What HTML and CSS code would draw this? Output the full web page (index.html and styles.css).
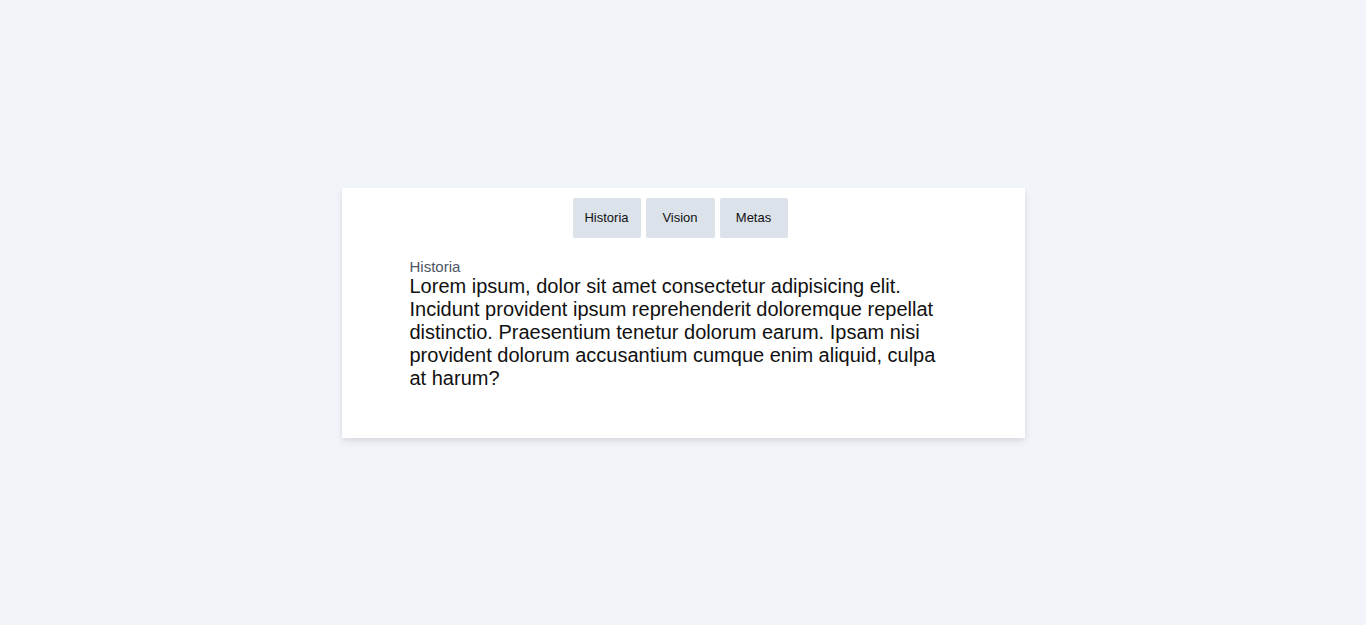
FILE: index.html
```html
<!DOCTYPE html>
<html lang="es">
<head>
<meta charset="utf-8">
<title>Tabs</title>
<link rel="stylesheet" href="styles.css">
</head>
<body>
<main class="page">
  <section class="card">
    <nav class="tabs">
      <button class="tab">Historia</button>
      <button class="tab">Vision</button>
      <button class="tab">Metas</button>
    </nav>
    <article class="content">
      <h2 class="label">Historia</h2>
      <p class="text">Lorem ipsum, dolor sit amet consectetur adipisicing elit. Incidunt provident ipsum reprehenderit doloremque repellat distinctio. Praesentium tenetur dolorum earum. Ipsam nisi provident dolorum accusantium cumque enim aliquid, culpa at harum?</p>
    </article>
  </section>
</main>
</body>
</html>
```
FILE: styles.css
```css
html, body {
  margin: 0;
  padding: 0;
}
body {
  background: #f1f5f9;
  font-family: "Liberation Sans", Arial, sans-serif;
}
.page {
  min-height: 625px;
  display: flex;
  align-items: center;
  justify-content: center;
}
.card {
  width: 683px;
  height: 250px;
  box-sizing: border-box;
  background: #fff;
  box-shadow: 0 4px 8px rgba(0, 0, 0, 0.08), 0 2px 4px rgba(0, 0, 0, 0.04);
  padding-top: 10px;
}
.tabs {
  display: flex;
  justify-content: center;
  gap: 5px;
  margin-right: 6px;
}
.tab {
  width: 68px;
  height: 40px;
  border: none;
  border-radius: 2px;
  background: #dbe2ea;
  color: #111;
  font-family: "Liberation Sans", Arial, sans-serif;
  font-size: 13px;
  padding: 0;
  cursor: pointer;
}
.tab:nth-child(2) {
  width: 69px;
}
.content {
  padding: 20px 68px 0;
}
.label {
  margin: 0;
  font-size: 15px;
  font-weight: normal;
  line-height: 17px;
  color: #4b5563;
}
.text {
  margin: 0;
  font-size: 20px;
  line-height: 23px;
  color: #111;
}
```
